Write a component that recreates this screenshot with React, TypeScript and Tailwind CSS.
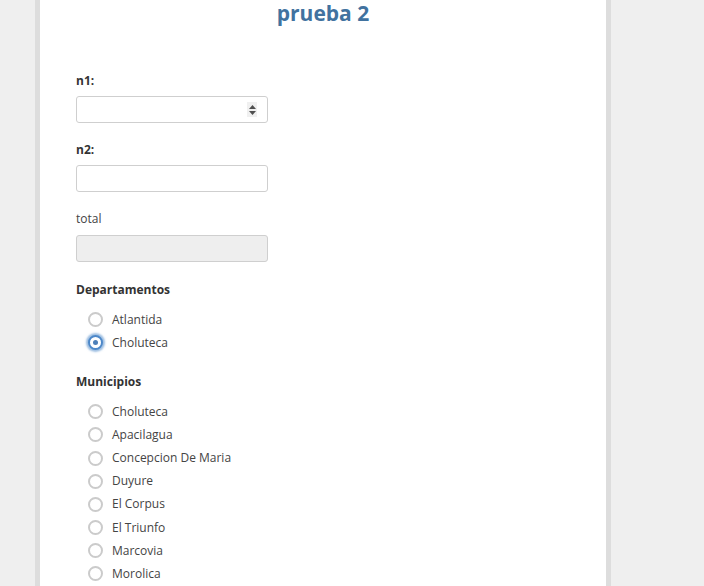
const font = { fontFamily: '"Open Sans", "Liberation Sans", sans-serif' };

function Radio({ label, checked }: { label: string; checked?: boolean }) {
  return (
    <div className="flex h-[23.15px] items-center">
      {checked ? (
        <span className="flex h-[15px] w-[15px] items-center justify-center rounded-full border-2 border-[#4d88c9] bg-white shadow-[0_0_2px_2px_rgba(77,136,201,0.55)]">
          <span className="h-[5px] w-[5px] rounded-full bg-[#4d7fb8]" />
        </span>
      ) : (
        <span className="h-[15px] w-[15px] rounded-full border-2 border-[#cbcbcb] bg-white" />
      )}
      <span className="ml-[9px] text-[12px] leading-[18px] text-[#444]">{label}</span>
    </div>
  );
}

function Field({ label, spinner }: { label: string; spinner?: boolean }) {
  return (
    <div className="mb-[18px]">
      <div className="mb-[6px] text-[12px] font-bold leading-[18px] text-[#333]">{label}</div>
      <div className="relative h-[27px] w-[192px] rounded-[3px] border border-[#cfcfcf] bg-white">
        {spinner && (
          <div className="absolute right-[10px] top-[5px] flex h-[15px] w-[10px] flex-col items-center justify-center gap-[2px] bg-[#f0f0f0]">
            <svg width="7" height="4" viewBox="0 0 7 4">
              <path d="M0 4 L3.5 0 L7 4 Z" fill="#505050" />
            </svg>
            <svg width="7" height="4" viewBox="0 0 7 4">
              <path d="M0 0 L3.5 4 L7 0 Z" fill="#505050" />
            </svg>
          </div>
        )}
      </div>
    </div>
  );
}

export default function App() {
  const municipios = [
    "Choluteca",
    "Apacilagua",
    "Concepcion De Maria",
    "Duyure",
    "El Corpus",
    "El Triunfo",
    "Marcovia",
    "Morolica",
  ];
  return (
    <div className="h-[586px] overflow-hidden bg-[#efefef]" style={font}>
      <div className="ml-[35px] h-full w-[576px] border-x-[5px] border-[#dddddd] bg-white">
        <h1 className="text-center text-[21px] font-bold leading-[26px] text-[#41729f]">prueba 2</h1>
        <div className="pl-[36px] pt-[46px]">
          <Field label="n1:" spinner />
          <Field label="n2:" />
          <div className="mb-[19px]">
            <div className="mb-[7px] text-[12px] leading-[18px] text-[#444]">total</div>
            <div className="h-[27px] w-[192px] rounded-[3px] border border-[#cfcfcf] bg-[#eeeeee]" />
          </div>
          <div className="text-[12px] font-bold leading-[18px] text-[#333]">Departamentos</div>
          <div className="mt-[9px] pl-[12px]">
            <Radio label="Atlantida" />
            <Radio label="Choluteca" checked />
          </div>
          <div className="mt-[19px] text-[12px] font-bold leading-[18px] text-[#333]">Municipios</div>
          <div className="mt-[9px] pl-[12px]">
            {municipios.map((m) => (
              <Radio key={m} label={m} />
            ))}
          </div>
        </div>
      </div>
    </div>
  );
}
